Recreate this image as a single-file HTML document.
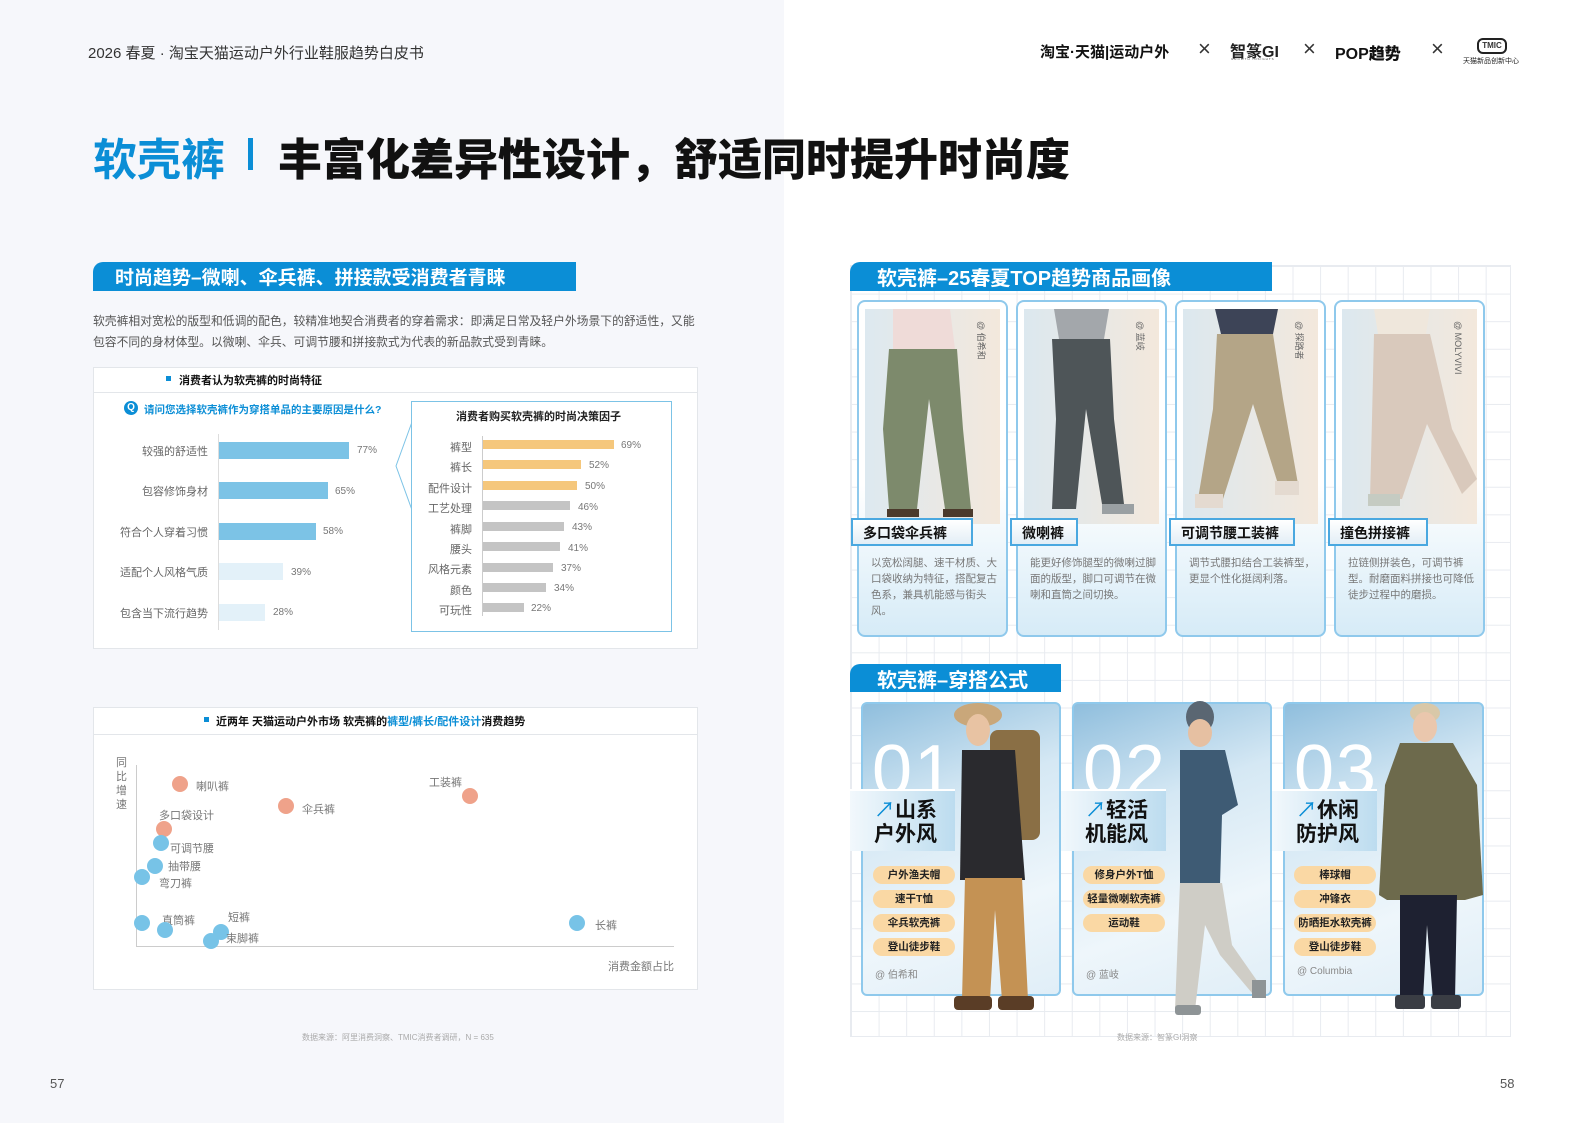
<!DOCTYPE html>
<html><head><meta charset="utf-8"><style>
*{margin:0;padding:0;box-sizing:border-box}
body{width:1587px;height:1123px;position:relative;overflow:hidden;background:#fff;font-family:"Liberation Sans","Noto Sans CJK SC",sans-serif;color:#333}
.a{position:absolute}
.left{left:0;top:0;width:784px;height:1123px;background:#f6f7fb}
.grid{left:850px;top:265px;width:661px;height:772px;background-image:linear-gradient(#e8ebf0 1px,transparent 1px),linear-gradient(90deg,#e8ebf0 1px,transparent 1px);background-size:27.6px 27.6px;border:1px solid #e8ebf0}
.ban{background:#0b8ed6;color:#fff;font-weight:700;border-radius:10px 0 0 0;white-space:nowrap}
.box{background:#fff;border:1px solid #e3e6ea}
.lbl{font-size:11px;color:#666;text-align:right;white-space:nowrap}
.pct{font-size:10px;color:#777}
.card{border:2px solid #8fc9ec;border-radius:8px;background:linear-gradient(#fff 55%,#d6ebf7)}
.tab{height:28px;background:linear-gradient(#fff,#e3eef6);border:2px solid #4aa8e0;font-weight:700;font-size:14px;color:#111;padding:3px 0 0 10px;white-space:nowrap}
.desc{font-size:10.5px;color:#777;line-height:16px}
.ocard{border:2px solid #8fc9ec;border-radius:6px;background:linear-gradient(160deg,#8fbedd 0%,#d5e8f4 35%,#eef6fb 70%,#e0eef7)}
.num{font-size:72px;color:#fff;font-weight:300;letter-spacing:2px;line-height:1}
.olab{height:62px;background:linear-gradient(90deg,#f2f8fc,#bcdcef);border-top:2px solid #fff;font-weight:700;font-size:21px;color:#111;line-height:24px;padding:8px 0 0 24px}
.pill{width:82px;height:18px;border-radius:9px;background:#fad8a4;font-size:10.5px;font-weight:700;color:#222;text-align:center;line-height:18px;white-space:nowrap}
.at{font-size:10px;color:#888}
.dot{width:16px;height:16px;border-radius:50%}
.o{background:#efa28a}.b{background:#77c3e7}
.sl{font-size:11px;color:#777;white-space:nowrap}
</style></head><body>
<div class="a left"></div>
<div class="a" style="left:88px;top:42px;font-size:15px;color:#333">2026 春夏 · 淘宝天猫运动户外行业鞋服趋势白皮书</div>
<div class="a" style="left:1040px;top:41px;font-size:15px;font-weight:700;color:#111;white-space:nowrap">淘宝·天猫|运动户外</div>
<div class="a" style="left:1198px;top:36px;font-size:22px;color:#333">×</div>
<div class="a" style="left:1230px;top:38px;font-size:16px;font-weight:700;color:#222;white-space:nowrap">智篆GI</div>
<div class="a" style="left:1231px;top:57px;font-size:3px;color:#444;letter-spacing:1px">GROWTH INSIGHTS</div>
<div class="a" style="left:1303px;top:36px;font-size:22px;color:#333">×</div>
<div class="a" style="left:1335px;top:40px;font-size:16px;font-weight:900;color:#111;white-space:nowrap">POP趋势</div>
<div class="a" style="left:1431px;top:36px;font-size:22px;color:#333">×</div>
<div class="a" style="left:1477px;top:38px;width:30px;height:16px;border:2px solid #222;border-radius:6px;font-size:8px;font-weight:900;text-align:center;line-height:12px">TMIC</div>
<div class="a" style="left:1463px;top:56px;font-size:7px;color:#222;white-space:nowrap">天猫新品创新中心</div>
<div class="a" style="left:93px;top:124px;font-size:44px;font-weight:700;color:#0b8ed6;white-space:nowrap">软壳裤</div>
<div class="a" style="left:248px;top:138px;width:5px;height:32px;background:#0b8ed6"></div>
<div class="a" style="left:278px;top:124px;font-size:44px;font-weight:900;color:#111;white-space:nowrap">丰富化差异性设计，舒适同时提升时尚度</div>
<div class="a ban" style="left:93px;top:262px;width:483px;height:29px;font-size:19px;padding:1px 0 0 22px">时尚趋势–微喇、伞兵裤、拼接款受消费者青睐</div>
<div class="a" style="left:93px;top:311px;width:612px;font-size:11.8px;color:#555;line-height:21px">软壳裤相对宽松的版型和低调的配色，较精准地契合消费者的穿着需求：即满足日常及轻户外场景下的舒适性，又能包容不同的身材体型。以微喇、伞兵、可调节腰和拼接款式为代表的新品款式受到青睐。</div>
<div class="a box" style="left:93px;top:367px;width:605px;height:282px"></div>
<div class="a" style="left:93px;top:392px;width:605px;height:1px;background:#e3e6ea"></div>
<div class="a" style="left:166px;top:376px;width:5px;height:5px;background:#0b8ed6"></div>
<div class="a" style="left:179px;top:372px;font-size:11px;font-weight:700;color:#111">消费者认为软壳裤的时尚特征</div>
<div class="a" style="left:124px;top:401px;width:14px;height:14px;border-radius:50%;background:#0b8ed6;color:#fff;font-size:10px;font-weight:700;text-align:center;line-height:14px">Q</div>
<div class="a" style="left:144px;top:402px;font-size:10.5px;font-weight:700;color:#0b8ed6;white-space:nowrap">请问您选择软壳裤作为穿搭单品的主要原因是什么?</div>
<div class="a" style="left:218px;top:434px;width:1px;height:196px;background:#ddd"></div>
<div class="a lbl" style="left:100px;top:443px;width:108px">较强的舒适性</div><div class="a" style="left:219px;top:442px;width:130px;height:17px;background:#7cc3e6"></div><div class="a pct" style="left:357px;top:445px">77%</div>
<div class="a lbl" style="left:100px;top:483px;width:108px">包容修饰身材</div><div class="a" style="left:219px;top:482px;width:109px;height:17px;background:#7cc3e6"></div><div class="a pct" style="left:335px;top:486px">65%</div>
<div class="a lbl" style="left:100px;top:524px;width:108px">符合个人穿着习惯</div><div class="a" style="left:219px;top:523px;width:97px;height:17px;background:#7cc3e6"></div><div class="a pct" style="left:323px;top:526px">58%</div>
<div class="a lbl" style="left:100px;top:564px;width:108px">适配个人风格气质</div><div class="a" style="left:219px;top:563px;width:64px;height:17px;background:#e3f1f9"></div><div class="a pct" style="left:291px;top:567px">39%</div>
<div class="a lbl" style="left:100px;top:605px;width:108px">包含当下流行趋势</div><div class="a" style="left:219px;top:604px;width:46px;height:17px;background:#e3f1f9"></div><div class="a pct" style="left:273px;top:607px">28%</div>
<svg class="a" style="left:394px;top:400px" width="20" height="120"><path d="M18 22 L2 66 L18 110" fill="#fff" stroke="#7cc3e6" stroke-width="1"/></svg>
<div class="a" style="left:411px;top:401px;width:261px;height:231px;border:1.5px solid #7cc3e6;background:#fff"></div>
<div class="a" style="left:456px;top:408px;font-size:11px;font-weight:700;color:#222;white-space:nowrap">消费者购买软壳裤的时尚决策因子</div>
<div class="a" style="left:482px;top:436px;width:1px;height:180px;background:#ccc"></div>
<div class="a lbl" style="left:410px;top:439px;width:62px">裤型</div><div class="a" style="left:483px;top:440px;width:131px;height:9px;background:#f5c77c"></div><div class="a pct" style="left:621px;top:440px">69%</div>
<div class="a lbl" style="left:410px;top:459px;width:62px">裤长</div><div class="a" style="left:483px;top:460px;width:98px;height:9px;background:#f5c77c"></div><div class="a pct" style="left:589px;top:460px">52%</div>
<div class="a lbl" style="left:410px;top:480px;width:62px">配件设计</div><div class="a" style="left:483px;top:481px;width:94px;height:9px;background:#f5c77c"></div><div class="a pct" style="left:585px;top:481px">50%</div>
<div class="a lbl" style="left:410px;top:500px;width:62px">工艺处理</div><div class="a" style="left:483px;top:501px;width:87px;height:9px;background:#c4c4c4"></div><div class="a pct" style="left:578px;top:502px">46%</div>
<div class="a lbl" style="left:410px;top:521px;width:62px">裤脚</div><div class="a" style="left:483px;top:522px;width:81px;height:9px;background:#c4c4c4"></div><div class="a pct" style="left:572px;top:522px">43%</div>
<div class="a lbl" style="left:410px;top:541px;width:62px">腰头</div><div class="a" style="left:483px;top:542px;width:77px;height:9px;background:#c4c4c4"></div><div class="a pct" style="left:568px;top:543px">41%</div>
<div class="a lbl" style="left:410px;top:561px;width:62px">风格元素</div><div class="a" style="left:483px;top:563px;width:70px;height:9px;background:#c4c4c4"></div><div class="a pct" style="left:561px;top:563px">37%</div>
<div class="a lbl" style="left:410px;top:582px;width:62px">颜色</div><div class="a" style="left:483px;top:583px;width:63px;height:9px;background:#c4c4c4"></div><div class="a pct" style="left:554px;top:583px">34%</div>
<div class="a lbl" style="left:410px;top:602px;width:62px">可玩性</div><div class="a" style="left:483px;top:603px;width:41px;height:9px;background:#c4c4c4"></div><div class="a pct" style="left:531px;top:603px">22%</div>
<div class="a box" style="left:93px;top:707px;width:605px;height:283px"></div>
<div class="a" style="left:93px;top:734px;width:605px;height:1px;background:#e3e6ea"></div>
<div class="a" style="left:204px;top:717px;width:5px;height:5px;background:#0b8ed6"></div>
<div class="a" style="left:216px;top:713px;font-size:11px;font-weight:700;color:#111;white-space:nowrap">近两年 天猫运动户外市场 软壳裤的<span style="color:#0b8ed6">裤型/裤长/配件设计</span>消费趋势</div>
<div class="a" style="left:116px;top:756px;width:12px;font-size:11px;color:#777;line-height:14px">同比增速</div>
<div class="a" style="left:136px;top:765px;width:1px;height:182px;background:#ccc"></div>
<div class="a" style="left:136px;top:946px;width:538px;height:1px;background:#ccc"></div>
<div class="a sl" style="left:608px;top:958px">消费金额占比</div>
<div class="a dot o" style="left:172px;top:776px"></div><div class="a sl" style="left:196px;top:778px">喇叭裤</div>
<div class="a dot o" style="left:278px;top:798px"></div><div class="a sl" style="left:302px;top:801px">伞兵裤</div>
<div class="a dot o" style="left:462px;top:788px"></div><div class="a sl" style="left:429px;top:774px">工装裤</div>
<div class="a sl" style="left:159px;top:807px">多口袋设计</div>
<div class="a dot o" style="left:156px;top:821px"></div>
<div class="a dot b" style="left:153px;top:835px"></div><div class="a sl" style="left:170px;top:840px">可调节腰</div>
<div class="a dot b" style="left:147px;top:858px"></div><div class="a sl" style="left:168px;top:858px">抽带腰</div>
<div class="a dot b" style="left:134px;top:869px"></div><div class="a sl" style="left:159px;top:875px">弯刀裤</div>
<div class="a dot b" style="left:134px;top:915px"></div><div class="a sl" style="left:162px;top:912px">直筒裤</div>
<div class="a dot b" style="left:157px;top:922px"></div>
<div class="a sl" style="left:228px;top:909px">短裤</div>
<div class="a dot b" style="left:213px;top:924px"></div><div class="a dot b" style="left:203px;top:933px"></div><div class="a sl" style="left:226px;top:930px">束脚裤</div>
<div class="a dot b" style="left:569px;top:915px"></div><div class="a sl" style="left:595px;top:917px">长裤</div>
<div class="a" style="left:302px;top:1032px;font-size:8px;color:#aaa;white-space:nowrap">数据来源：阿里消费洞察、TMIC消费者调研，N = 635</div>
<div class="a" style="left:50px;top:1076px;font-size:13px;color:#555">57</div>
<div class="a" style="left:1500px;top:1076px;font-size:13px;color:#555">58</div>
<div class="a grid"></div>
<div class="a ban" style="left:850px;top:262px;width:422px;height:29px;font-size:20px;padding:0 0 0 27px">软壳裤–25春夏TOP趋势商品画像</div>
<div class="a card" style="left:857px;top:300px;width:151px;height:337px"></div>
<div class="a card" style="left:1016px;top:300px;width:151px;height:337px"></div>
<div class="a card" style="left:1175px;top:300px;width:151px;height:337px"></div>
<div class="a card" style="left:1334px;top:300px;width:151px;height:337px"></div>
<svg class="a" style="left:865px;top:309px" width="135" height="215"><defs><linearGradient id="g1" x1="0" x2="1"><stop offset="0" stop-color="#dde9f0"/><stop offset="1" stop-color="#f3e8dc"/></linearGradient></defs><rect width="135" height="215" fill="url(#g1)"/><path d="M28 0 H85 L90 40 H28Z" fill="#efdbd8"/><path d="M24 40 H92 L98 120 L106 200 H80 L64 90 L52 200 H24 L18 120Z" fill="#7d8a6c"/><rect x="22" y="200" width="32" height="8" fill="#4b3a2c"/><rect x="78" y="200" width="30" height="8" fill="#4b3a2c"/><text x="113" y="12" font-size="9" fill="#666" transform="rotate(90 113 12)" font-family="Liberation Sans,Noto Sans CJK SC,sans-serif">@ 伯希和</text></svg>
<svg class="a" style="left:1024px;top:309px" width="135" height="215"><defs><linearGradient id="g2" x1="0" x2="1"><stop offset="0" stop-color="#dce8ef"/><stop offset="1" stop-color="#f3e8dc"/></linearGradient></defs><rect width="135" height="215" fill="url(#g2)"/><path d="M30 0 H85 L80 30 H35Z" fill="#a3a7ab"/><path d="M28 30 H86 L90 110 L100 195 H78 L62 100 L52 200 H28 L32 110Z" fill="#4e5558"/><rect x="78" y="195" width="32" height="10" fill="#9aa0a3"/><text x="113" y="12" font-size="9" fill="#666" transform="rotate(90 113 12)" font-family="Liberation Sans,Noto Sans CJK SC,sans-serif">@ 蓝岐</text></svg>
<svg class="a" style="left:1183px;top:309px" width="135" height="215"><defs><linearGradient id="g3" x1="0" x2="1"><stop offset="0" stop-color="#dce8ef"/><stop offset="1" stop-color="#f3e8dc"/></linearGradient></defs><rect width="135" height="215" fill="url(#g3)"/><path d="M32 0 H95 L90 25 H38Z" fill="#3d4457"/><path d="M34 25 H90 L100 90 L115 175 H95 L70 95 L40 190 H15 L30 100Z" fill="#b4a587"/><rect x="12" y="185" width="28" height="14" fill="#e4dad0"/><rect x="92" y="172" width="24" height="14" fill="#e4dad0"/><text x="113" y="12" font-size="9" fill="#666" transform="rotate(90 113 12)" font-family="Liberation Sans,Noto Sans CJK SC,sans-serif">@ 探路者</text></svg>
<svg class="a" style="left:1342px;top:309px" width="135" height="215"><defs><linearGradient id="g4" x1="0" x2="1"><stop offset="0" stop-color="#dce8ef"/><stop offset="1" stop-color="#f3e8dc"/></linearGradient></defs><rect width="135" height="215" fill="url(#g4)"/><path d="M32 0 H88 L84 25 H36Z" fill="#efe7dc"/><path d="M32 25 H88 L110 120 L135 170 L120 185 L85 115 L60 190 H28 L30 110Z" fill="#d9c9bc"/><rect x="26" y="185" width="32" height="12" fill="#c5cbc2"/><text x="113" y="12" font-size="9" fill="#666" transform="rotate(90 113 12)" font-family="Liberation Sans,Noto Sans CJK SC,sans-serif">@ MOLYVIVI</text></svg>
<div class="a tab" style="left:851px;top:518px;width:122px">多口袋伞兵裤</div>
<div class="a tab" style="left:1010px;top:518px;width:68px">微喇裤</div>
<div class="a tab" style="left:1169px;top:518px;width:126px">可调节腰工装裤</div>
<div class="a tab" style="left:1328px;top:518px;width:100px">撞色拼接裤</div>
<div class="a desc" style="left:871px;top:555px;width:126px">以宽松阔腿、速干材质、大口袋收纳为特征，搭配复古色系，兼具机能感与街头风。</div>
<div class="a desc" style="left:1030px;top:555px;width:126px">能更好修饰腿型的微喇过脚面的版型，脚口可调节在微喇和直筒之间切换。</div>
<div class="a desc" style="left:1189px;top:555px;width:126px">调节式腰扣结合工装裤型，更显个性化挺阔利落。</div>
<div class="a desc" style="left:1348px;top:555px;width:126px">拉链侧拼装色，可调节裤型。耐磨面料拼接也可降低徒步过程中的磨损。</div>
<div class="a ban" style="left:850px;top:664px;width:211px;height:28px;font-size:20px;padding:0 0 0 27px">软壳裤–穿搭公式</div>
<div class="a ocard" style="left:861px;top:702px;width:200px;height:294px"></div>
<div class="a ocard" style="left:1072px;top:702px;width:200px;height:294px"></div>
<div class="a ocard" style="left:1283px;top:702px;width:201px;height:294px"></div>
<div class="a num" style="left:872px;top:735px">01</div>
<div class="a num" style="left:1083px;top:735px">02</div>
<div class="a num" style="left:1294px;top:735px">03</div>
<div class="a olab" style="left:850px;top:789px;width:105px"><span style="color:#0b8ed6;font-weight:400">↗</span>山系<br>户外风</div>
<div class="a olab" style="left:1061px;top:789px;width:105px"><span style="color:#0b8ed6;font-weight:400">↗</span>轻活<br>机能风</div>
<div class="a olab" style="left:1272px;top:789px;width:105px"><span style="color:#0b8ed6;font-weight:400">↗</span>休闲<br>防护风</div>
<svg class="a" style="left:940px;top:700px" width="120" height="320"><ellipse cx="38" cy="15" rx="24" ry="12" fill="#c9a77a"/><ellipse cx="38" cy="30" rx="12" ry="16" fill="#e8c3a3"/><rect x="50" y="30" width="50" height="110" rx="8" fill="#8a6f45"/><path d="M22 50 H75 L85 180 H20Z" fill="#2a2a2e"/><path d="M25 178 H82 L88 300 H62 L55 210 L50 300 H22Z" fill="#c49254"/><rect x="14" y="296" width="38" height="14" rx="4" fill="#5a3d26"/><rect x="58" y="296" width="36" height="14" rx="4" fill="#5a3d26"/></svg>
<svg class="a" style="left:1160px;top:695px" width="120" height="325"><ellipse cx="40" cy="22" rx="14" ry="16" fill="#5a6672"/><ellipse cx="40" cy="38" rx="12" ry="14" fill="#e6c0a2"/><path d="M20 55 H65 L78 110 L62 120 L60 190 H20Z" fill="#3e5b74"/><path d="M20 188 H62 L72 250 L100 290 L92 298 L60 260 L45 230 L35 315 H15Z" fill="#cfcdc6"/><rect x="15" y="310" width="26" height="10" rx="3" fill="#8e9496"/><rect x="92" y="285" width="14" height="18" fill="#8e9496"/></svg>
<svg class="a" style="left:1365px;top:695px" width="130" height="325"><ellipse cx="60" cy="18" rx="15" ry="10" fill="#d9c8a8"/><ellipse cx="60" cy="32" rx="12" ry="15" fill="#eac7ad"/><path d="M35 48 H88 L112 90 L118 200 L100 205 H22 L14 200 L20 90Z" fill="#6d6a4c"/><path d="M35 200 H92 L90 305 H68 L62 230 L58 305 H35Z" fill="#1e2131"/><rect x="30" y="300" width="30" height="14" rx="3" fill="#3a3d44"/><rect x="66" y="300" width="30" height="14" rx="3" fill="#3a3d44"/></svg>
<div class="a pill" style="left:873px;top:866px">户外渔夫帽</div>
<div class="a pill" style="left:873px;top:890px">速干T恤</div>
<div class="a pill" style="left:873px;top:914px">伞兵软壳裤</div>
<div class="a pill" style="left:873px;top:938px">登山徒步鞋</div>
<div class="a at" style="left:875px;top:966px">@ 伯希和</div>
<div class="a pill" style="left:1083px;top:866px">修身户外T恤</div>
<div class="a pill" style="left:1083px;top:890px">轻量微喇软壳裤</div>
<div class="a pill" style="left:1083px;top:914px">运动鞋</div>
<div class="a at" style="left:1086px;top:966px">@ 蓝岐</div>
<div class="a pill" style="left:1294px;top:866px">棒球帽</div>
<div class="a pill" style="left:1294px;top:890px">冲锋衣</div>
<div class="a pill" style="left:1294px;top:914px">防晒拒水软壳裤</div>
<div class="a pill" style="left:1294px;top:938px">登山徒步鞋</div>
<div class="a at" style="left:1297px;top:966px">@ Columbia</div>
<div class="a" style="left:1117px;top:1032px;font-size:8px;color:#aaa;white-space:nowrap">数据来源：智篆GI洞察</div>
</body></html>
